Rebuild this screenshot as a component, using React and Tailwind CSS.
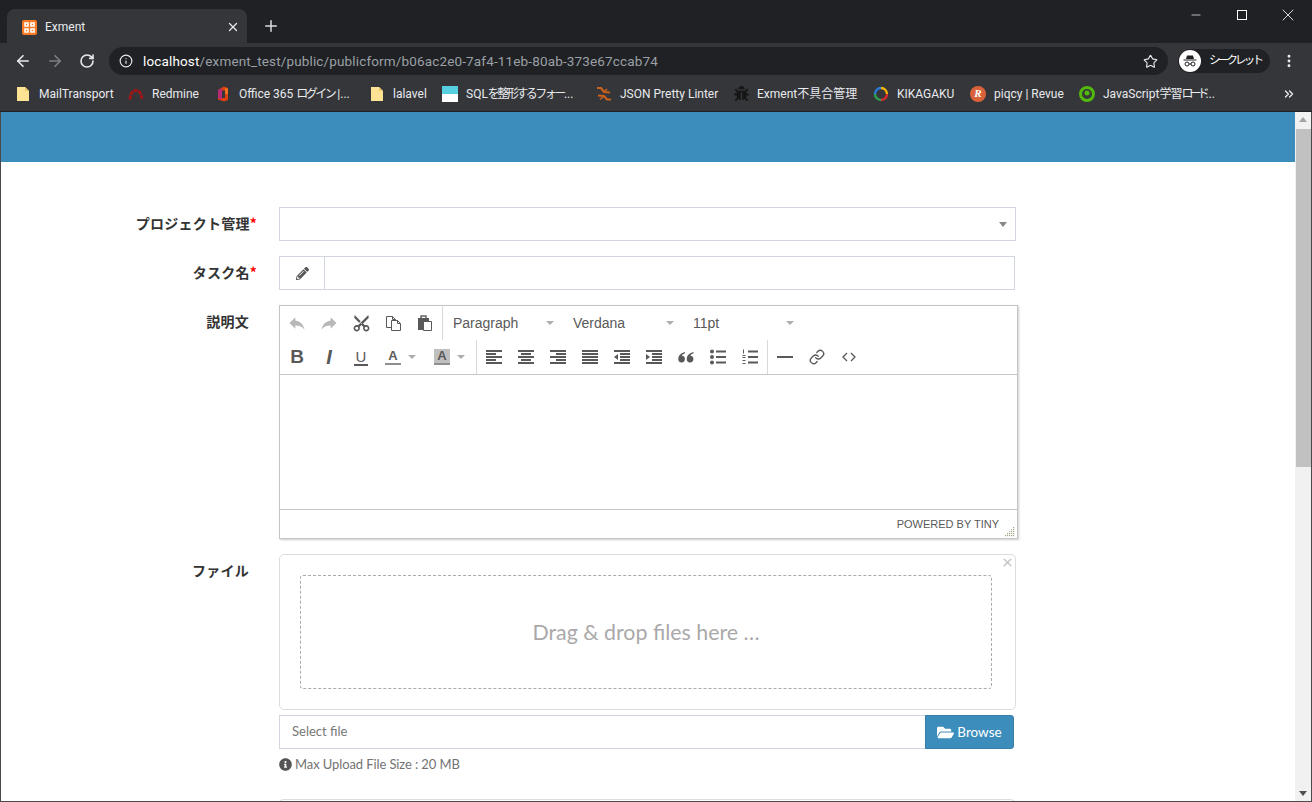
import { ArrowLeft, ArrowRight, RotateCw, Info, Star, EllipsisVertical, X, Plus, Minus, Square, ChevronsRight, Link } from "lucide-react";
import { FaPencilAlt, FaFolderOpen, FaInfoCircle, FaBug } from "react-icons/fa";
import { MdReply, MdContentCut } from "react-icons/md";

function FolderIcon() {
  return (
    <svg width="16" height="16" viewBox="0 0 16 16">
      <path d="M2 1h8l4 4v10H2z" fill="#fde293" />
      <path d="M10 1l4 4h-4z" fill="#e6c86e" />
    </svg>
  );
}

function RedmineIcon() {
  return (
    <svg width="16" height="16" viewBox="0 0 16 16" fill="none">
      <path d="M2 13.500C2.500 7 5 4.500 8 4.500s5.500 2.500 6 9" stroke="#a01616" strokeWidth="3" strokeDasharray="4 0.8" />
    </svg>
  );
}

function OfficeIcon() {
  return (
    <svg width="16" height="16" viewBox="0 0 16 16">
      <path d="M3 4l6-3.500 4 1.500v12l-4 1.500-6-2z" fill="#e0400f" />
      <path d="M3 4l4-1.500v11L3 12z" fill="#b62a78" />
      <path d="M7 4.500h3v7.500H7z" fill="#35363a" />
      <path d="M10 2l3 .5V8h-3z" fill="#f0731f" />
    </svg>
  );
}

function SqlIcon() {
  return (
    <svg width="16" height="16" viewBox="0 0 16 16">
      <rect width="16" height="8" fill="#56cfe1" />
      <rect y="8" width="16" height="8" fill="#fff" />
    </svg>
  );
}

function JsonIcon() {
  return (
    <svg width="16" height="16" viewBox="0 0 16 16" fill="none" stroke="#c8601e" strokeWidth="2.200">
      <path d="M1 2h4l3 4 6 .5" />
      <path d="M2 9.500l6 .5 3 3.500h4" />
      <path d="M4 13.500l4-3.500M8 6l3-3" strokeWidth="1.600" />
    </svg>
  );
}

function KikagakuIcon() {
  return (
    <svg width="16" height="16" viewBox="0 0 16 16" fill="none" strokeWidth="2.400">
      <path d="M8 2a6 6 0 0 1 6 6" stroke="#f2b705" />
      <path d="M14 8a6 6 0 0 1-6 6" stroke="#d92b2b" />
      <path d="M8 14a6 6 0 0 1-6-6" stroke="#2e9e4f" />
      <path d="M2 8a6 6 0 0 1 6-6" stroke="#2b7bd9" />
    </svg>
  );
}

function PiqcyIcon() {
  return (
    <span className="flex w-4 h-4 items-center justify-center rounded-full bg-[#d9623a] text-white text-[11px] font-bold italic font-['Liberation_Serif',serif]">
      R
    </span>
  );
}

function RoadmapIcon() {
  return (
    <svg width="16" height="16" viewBox="0 0 16 16" fill="none">
      <circle cx="8" cy="8" r="6.500" stroke="#52b80c" strokeWidth="3" />
      <circle cx="8" cy="7" r="2.500" fill="#52b80c" />
    </svg>
  );
}

function Kana({ children }) {
  return <span className="tracking-[-2.5px]">{children}</span>;
}

const bookmarks = [
  { icon: <FolderIcon />, label: "MailTransport", width: "w-[73px]" },
  { icon: <RedmineIcon />, label: "Redmine", width: "w-[47px]" },
  { icon: <OfficeIcon />, label: <>Office 365 <Kana>ログイン</Kana> |...</>, width: "w-[114px]" },
  { icon: <FolderIcon />, label: "lalavel", width: "w-[33px]" },
  { icon: <SqlIcon />, label: <>SQL<span className="tracking-[-2.5px]">を整形する</span><Kana>フォー</Kana>...</>, width: "w-[114px]" },
  { icon: <JsonIcon />, label: "JSON Pretty Linter", width: "w-[97px]" },
  { icon: <FaBug className="text-[#161616]" size={15} />, label: "Exment不具合管理", width: "w-[100px]" },
  { icon: <KikagakuIcon />, label: "KIKAGAKU", width: "w-[57px]" },
  { icon: <PiqcyIcon />, label: "piqcy | Revue", width: "w-[69px]" },
  { icon: <RoadmapIcon />, label: <>JavaScript<span className="tracking-[-1px]">学習</span><span className="tracking-[-4px]">ロード</span>...</>, width: "w-[110px]" },
];

function BrowserChrome() {
  return (
    <header className="shrink-0 bg-[#35363a] text-white font-['Roboto','Noto_Sans_CJK_JP',sans-serif]">
      <div className="flex h-[43px] bg-[#202124] pl-[7px]">
        <div className="mt-[9px] flex h-[34px] w-[240px] items-center rounded-t-lg bg-[#35363a] pl-[15px] pr-[7px] pt-[2px]">
          <span className="flex h-[15px] w-[15px] items-center justify-center rounded-[2px] bg-[#fb7a24]">
            <svg width="11" height="11" viewBox="0 0 11 11" fill="none" stroke="#fff" strokeWidth="1.600">
              <path d="M1 1h3v3H1zM7 1h3v3H7zM1 7h3v3H1zM7 7h3v3H7z" />
            </svg>
          </span>
          <span className="ml-2 flex-1 text-xs text-[#e8eaed]">Exment</span>
          <X size={14} strokeWidth={2.200} className="text-[#e8eaed]" />
        </div>
        <Plus size={18} strokeWidth={2} className="ml-[15px] mt-[17px] text-[#dadce0]" />
        <div className="ml-auto flex pr-px">
          <span className="flex w-[46px] justify-center pt-[8px]"><Minus size={14} strokeWidth={1.200} /></span>
          <span className="flex w-[46px] justify-center pt-[10px]"><span className="h-[10px] w-[10px] border border-white" /></span>
          <span className="flex w-[46px] justify-center pt-[5px]"><X size={20} strokeWidth={1} /></span>
        </div>
      </div>

      <div className="flex h-[34px] items-center pl-[14px] pr-[14px] pt-[2px]">
        <ArrowLeft size={18} strokeWidth={2.200} className="text-[#e8eaed]" />
        <ArrowRight size={18} strokeWidth={2.200} className="ml-[14px] text-[#7d7f83]" />
        <RotateCw size={16} strokeWidth={2.400} className="ml-[15px] text-[#e8eaed]" />
        <div className="ml-[14px] flex h-[28px] w-[1059px] shrink-0 items-center rounded-full bg-[#202124] pl-[10px] pr-[10px]">
          <Info size={14} strokeWidth={2} className="text-[#e8eaed]" />
          <span className="ml-[10px] flex-1 text-[13.5px] tracking-[0.15px] text-[#9aa0a6] whitespace-nowrap">
            <span className="text-white">localhost</span>/exment_test/public/publicform/b06ac2e0-7af4-11eb-80ab-373e67ccab74
          </span>
          <Star size={15} strokeWidth={1.800} className="text-[#e8eaed]" />
        </div>
        <div className="ml-[10px] flex h-[24px] w-[92px] shrink-0 items-center rounded-full bg-[#202124] pl-px">
          <span className="flex h-[22px] w-[22px] shrink-0 items-center justify-center rounded-full bg-white">
            <svg width="16" height="14" viewBox="0 0 16 14" fill="#202124">
              <path d="M5 1.500h6l1 3.500H4z" />
              <rect x="1.500" y="5.500" width="13" height="1" />
              <circle cx="5" cy="10" r="2" fill="none" stroke="#202124" strokeWidth="1" />
              <circle cx="11" cy="10" r="2" fill="none" stroke="#202124" strokeWidth="1" />
              <rect x="7" y="9.500" width="2" height="1" />
            </svg>
          </span>
          <span className="ml-2 text-[11.5px] tracking-[-2.800px] whitespace-nowrap">シークレット</span>
        </div>
        <EllipsisVertical size={16} strokeWidth={2.400} className="ml-[11px] text-[#e8eaed]" />
      </div>

      <div className="flex h-[35px] items-center gap-4 border-b border-[#202124] pb-px pl-[15px] pr-[16px]">
        {bookmarks.map((b, i) => (
          <div key={i} className="flex items-center gap-2">
            <span className="flex h-4 w-4 items-center justify-center">{b.icon}</span>
            <span className={`${b.width} text-xs whitespace-nowrap text-[#e8eaed]`}>{b.label}</span>
          </div>
        ))}
        <ChevronsRight size={14} strokeWidth={2.400} className="ml-auto text-[#e8eaed]" />
      </div>
    </header>
  );
}

function Lines({ rows }) {
  return (
    <svg width="16" height="16" viewBox="0 0 16 16" fill="#595959">
      {rows.map((r, i) => (
        <rect key={i} x={r[0]} y={1 + i * 3} width={r[1]} height="2" />
      ))}
    </svg>
  );
}

function Indent({ out }) {
  return (
    <svg width="16" height="16" viewBox="0 0 16 16" fill="#595959">
      <rect x="0" y="1" width="16" height="2" />
      <rect x="6" y="4" width="10" height="2" />
      <rect x="6" y="7" width="10" height="2" />
      <rect x="6" y="10" width="10" height="2" />
      <rect x="0" y="13" width="16" height="2" />
      <path d={out ? "M4 5v6L0 8z" : "M0 5v6l4-3z"} />
    </svg>
  );
}

function BulletList() {
  return (
    <svg width="16" height="16" viewBox="0 0 16 16" fill="#595959">
      <circle cx="2" cy="2.500" r="2" />
      <circle cx="2" cy="8" r="2" />
      <circle cx="2" cy="13.500" r="2" />
      <rect x="6" y="1.500" width="10" height="2" />
      <rect x="6" y="7" width="10" height="2" />
      <rect x="6" y="12.500" width="10" height="2" />
    </svg>
  );
}

function NumberList() {
  return (
    <svg width="16" height="16" viewBox="0 0 16 16" fill="#595959">
      <rect x="1" y="0.500" width="1" height="4" />
      <rect x="0.500" y="6" width="3" height="1" />
      <rect x="0.500" y="8" width="3" height="1" />
      <rect x="0.500" y="11" width="3" height="1" />
      <rect x="0.500" y="14" width="3" height="1" />
      <rect x="6" y="1.500" width="10" height="2" />
      <rect x="6" y="7" width="10" height="2" />
      <rect x="6" y="12.500" width="10" height="2" />
    </svg>
  );
}

function CopyIcon() {
  return (
    <svg width="17" height="17" viewBox="0 0 17 17" fill="#fff" stroke="#595959" strokeWidth="1">
      <path d="M1.500 1.500h6l3 3v8h-9z" />
      <path d="M6.500 5.500h6l3 3v7h-9z" />
      <path d="M12.500 5.500v3h3M7.500 1.500v3h3" fill="none" />
    </svg>
  );
}

function PasteIcon() {
  return (
    <svg width="16" height="17" viewBox="0 0 16 17">
      <rect x="1" y="3" width="11" height="12" fill="#595959" />
      <rect x="4" y="1" width="5" height="3" fill="none" stroke="#595959" strokeWidth="1.400" />
      <path d="M6.500 6.500h8v9h-8z" fill="#fff" stroke="#595959" />
    </svg>
  );
}

function QuoteIcon() {
  return (
    <svg width="16" height="14" viewBox="0 0 16 14" fill="#595959">
      <path d="M7 2C3 3 .3 5.500.3 9a3.300 3.300 0 1 0 3.500-3.200C4.300 4.500 5.500 3.700 7 3.200z" />
      <path d="M15.500 2c-4 1-6.700 3.500-6.700 7a3.300 3.300 0 1 0 3.500-3.200c.5-1.300 1.700-2.100 3.200-2.600z" />
    </svg>
  );
}

function CodeIcon() {
  return (
    <svg width="14" height="10" viewBox="0 0 14 10" fill="none" stroke="#595959" strokeWidth="1.300">
      <path d="M5 1L1 5l4 4M9 1l4 4-4 4" />
    </svg>
  );
}

function Caret() {
  return <span className="h-0 w-0 border-x-[4px] border-t-[4px] border-x-transparent border-t-[#adadad]" />;
}

function ToolBtn({ children }) {
  return <span className="flex h-[34px] w-[32px] items-center justify-center text-[#595959]">{children}</span>;
}

function ListBox({ label }) {
  return (
    <div className="flex h-[34px] w-[120px] items-center pl-[9px] text-sm text-[#595959]">
      <span className="w-[93px]">{label}</span>
      <Caret />
    </div>
  );
}

function ColorBtn({ highlight }) {
  return (
    <div className="flex h-[34px] w-[49px] items-center pl-[8px]">
      <span className={`flex h-4 w-4 flex-col items-center justify-between text-[13px] leading-[13px] font-bold text-[#595959] ${highlight ? "bg-[#bfbfbf]" : ""}`}>
        A
        <span className="h-[2px] w-full bg-[#8f8f8f]" />
      </span>
      <span className="ml-[7px] flex"><Caret /></span>
    </div>
  );
}

function Editor() {
  return (
    <div className="w-[739px] h-[234px] border border-[#c5c5c5] shadow-[1px_1px_2px_rgba(0,0,0,0.2)] flex flex-col font-['Liberation_Sans',sans-serif]">
      <div className="flex pl-px">
        <ToolBtn><MdReply size={20} className="text-[#b8b8b8]" /></ToolBtn>
        <ToolBtn><MdReply size={20} className="scale-x-[-1] text-[#b8b8b8]" /></ToolBtn>
        <ToolBtn><MdContentCut size={19} className="rotate-[-90deg]" /></ToolBtn>
        <ToolBtn><CopyIcon /></ToolBtn>
        <ToolBtn><PasteIcon /></ToolBtn>
        <div className="w-px bg-[#d9d9d9] mr-[1px] ml-[1px]" />
        <ListBox label="Paragraph" />
        <ListBox label="Verdana" />
        <ListBox label="11pt" />
      </div>
      <div className="flex pl-px border-b border-[#c5c5c5]">
        <ToolBtn><span className="text-[19px] font-bold">B</span></ToolBtn>
        <ToolBtn><span className="text-[20px] italic font-bold">I</span></ToolBtn>
        <ToolBtn>
          <span className="border-b-2 border-[#595959] text-[15px] leading-[15px] px-[2px]">U</span>
        </ToolBtn>
        <ColorBtn />
        <ColorBtn highlight />
        <div className="w-px bg-[#d9d9d9] ml-[1px] mr-[1px]" />
        <ToolBtn><Lines rows={[[0, 16], [0, 10], [0, 16], [0, 10], [0, 16]]} /></ToolBtn>
        <ToolBtn><Lines rows={[[0, 16], [3, 10], [0, 16], [3, 10], [0, 16]]} /></ToolBtn>
        <ToolBtn><Lines rows={[[0, 16], [6, 10], [0, 16], [6, 10], [0, 16]]} /></ToolBtn>
        <ToolBtn><Lines rows={[[0, 16], [0, 16], [0, 16], [0, 16], [0, 16]]} /></ToolBtn>
        <ToolBtn><Indent out /></ToolBtn>
        <ToolBtn><Indent /></ToolBtn>
        <ToolBtn><QuoteIcon /></ToolBtn>
        <ToolBtn><BulletList /></ToolBtn>
        <ToolBtn><NumberList /></ToolBtn>
        <div className="w-px bg-[#d9d9d9] ml-px mr-px" />
        <ToolBtn><span className="h-[2px] w-4 bg-[#595959]" /></ToolBtn>
        <ToolBtn><Link size={16} strokeWidth={2} className="text-[#595959]" /></ToolBtn>
        <ToolBtn><CodeIcon /></ToolBtn>
      </div>
      <div className="flex-1 bg-white" />
      <div className="relative flex h-[29px] items-center justify-end border-t border-[#c5c5c5] pr-[18px] text-[11px] text-[#595959]">
        POWERED BY TINY
        <svg className="absolute bottom-[1px] right-[2px]" width="10" height="10" viewBox="0 0 10 10" fill="#a8a88a">
          <rect x="8" y="0" width="1.200" height="1.200" />
          <rect x="6" y="2" width="1.200" height="1.200" /><rect x="8" y="2" width="1.200" height="1.200" />
          <rect x="4" y="4" width="1.200" height="1.200" /><rect x="6" y="4" width="1.200" height="1.200" /><rect x="8" y="4" width="1.200" height="1.200" />
          <rect x="2" y="6" width="1.200" height="1.200" /><rect x="4" y="6" width="1.200" height="1.200" /><rect x="6" y="6" width="1.200" height="1.200" /><rect x="8" y="6" width="1.200" height="1.200" />
          <rect x="0" y="8" width="1.200" height="1.200" /><rect x="2" y="8" width="1.200" height="1.200" /><rect x="4" y="8" width="1.200" height="1.200" /><rect x="6" y="8" width="1.200" height="1.200" /><rect x="8" y="8" width="1.200" height="1.200" />
        </svg>
      </div>
    </div>
  );
}

function Row({ label, required, children }) {
  return (
    <div className="flex items-start">
      <label className={`w-[256px] shrink-0 pt-[6px] text-right text-sm leading-5 font-semibold tracking-[0.25px] text-[#333] font-['Noto_Sans_CJK_JP',sans-serif] ${required ? "" : "pr-2"}`}>
        {label}
        {required && <span className="text-[#ff0000]">*</span>}
      </label>
      <div className="ml-[22px]">{children}</div>
    </div>
  );
}

function Scrollbar() {
  return (
    <aside className="flex w-4 shrink-0 flex-col items-center bg-[#f1f1f1]">
      <span className="mt-[5px] h-0 w-0 border-x-[4px] border-b-[5px] border-x-transparent border-b-[#a3a3a3]" />
      <span className="mt-[7px] h-[338px] w-[15px] bg-[#c1c1c1]" />
      <span className="mb-[5px] mt-auto h-0 w-0 border-x-[4px] border-t-[5px] border-x-transparent border-t-[#505050]" />
    </aside>
  );
}

export default function App() {
  return (
    <div className="flex h-[802px] w-[1312px] flex-col overflow-hidden bg-white">
      <BrowserChrome />
      <main className="flex min-h-0 flex-1 border-x border-b border-[#4a4a4a]">
        <section className="flex-1 overflow-hidden font-['Lato','Noto_Sans_CJK_JP',sans-serif]">
          <div className="h-[50px] bg-[#3c8dbc]" />
          <form className="flex flex-col gap-[15px] pt-[45px]">
            <Row label="プロジェクト管理" required>
              <div className="flex h-[34px] w-[737px] items-center justify-end border border-[#d2d6de] pr-[8px]">
                <span className="h-0 w-0 border-x-[4px] border-t-[5px] border-x-transparent border-t-[#888]" />
              </div>
            </Row>
            <Row label="タスク名" required>
              <div className="flex h-[34px] w-[736px] border border-[#d2d6de]">
                <span className="flex w-[45px] items-center justify-center border-r border-[#d2d6de] text-[#555]">
                  <FaPencilAlt size={13} />
                </span>
              </div>
            </Row>
            <Row label="説明文">
              <Editor />
            </Row>
            <Row label="ファイル">
              <div className="relative h-[156px] w-[737px] rounded-[5px] border border-[#ddd] pl-[20px] pr-[23px] pt-[20px]">
                <X size={13} strokeWidth={3} className="absolute right-[1px] top-[1px] text-[#c8c8c8]" />
                <div className="flex h-[114px] items-center justify-center rounded-[3px] border border-dashed border-[#aaa] text-[21.4px] text-[#a9a9a9]">
                  Drag &amp; drop files here …
                </div>
              </div>
              <div className="mt-[5px] flex h-[34px] w-[735px]">
                <div className="flex flex-1 items-center border border-r-0 border-[#d2d6de] pl-[12px] text-[13px] text-[#777]">
                  Select file
                </div>
                <span className="flex w-[89px] items-center justify-center gap-[3px] rounded-r-[3px] border border-[#367fa9] bg-[#3c8dbc] text-[13.5px] text-white">
                  <FaFolderOpen size={17} />
                  Browse
                </span>
              </div>
              <p className="mt-[7px] flex items-center gap-[3px] text-[13px] leading-[16px] tracking-[-0.1px] text-[#737373]">
                <FaInfoCircle size={13} className="text-[#555]" />
                Max Upload File Size : 20 MB
              </p>
              <div className="mt-[27px] h-10 w-[736px] rounded-t-[4px] border border-[#ddd]" />
            </Row>
          </form>
        </section>
        <Scrollbar />
      </main>
    </div>
  );
}
